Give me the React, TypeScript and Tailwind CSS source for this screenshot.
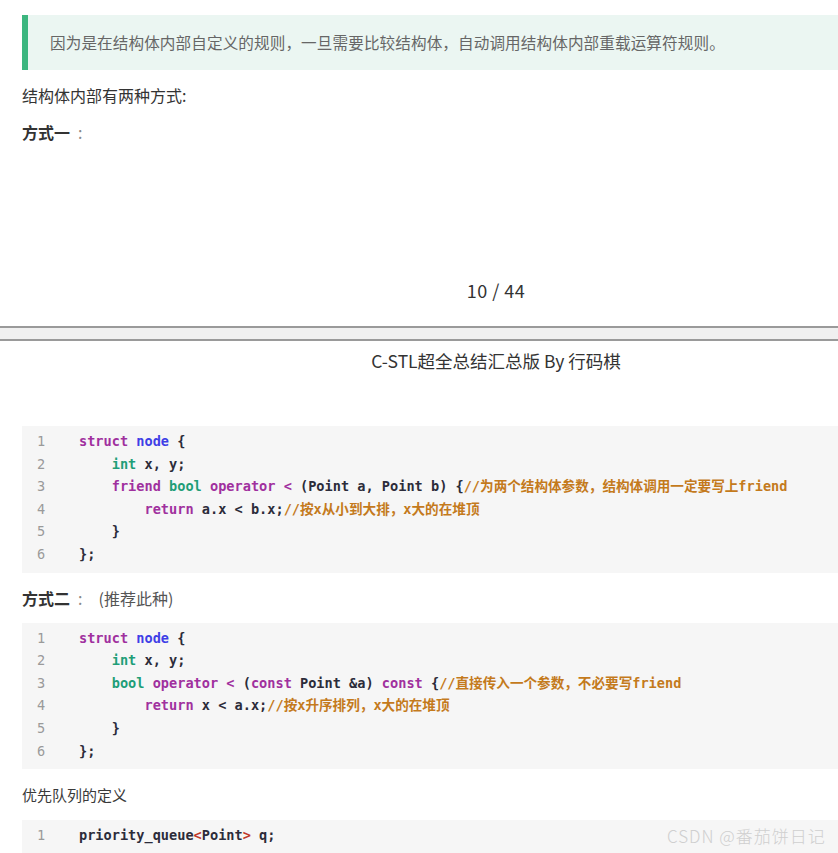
import React from "react";

type Tok = [string, string];

const K = "text-[#a0309e]"; // keyword purple
const T = "text-[#1f9e78]"; // type teal
const N = "text-[#3f3fe6]"; // name blue
const D = "text-[#2c2c3a]"; // default dark
const C = "text-[#c47a1c]"; // comment
const R = "text-[#c0392b]"; // angle brackets

const sans = "font-['Noto_Sans_CJK_SC','Noto_Sans',sans-serif]";
const mono = "font-['DejaVu_Sans_Mono','Noto_Sans_CJK_SC',monospace]";

const codeOne: Tok[][] = [
  [[K, "struct "], [N, "node "], [D, "{"]],
  [[D, "    "], [T, "int "], [D, "x, y;"]],
  [[D, "    "], [K, "friend "], [T, "bool "], [K, "operator < "], [D, "(Point a, Point b) {"], [C, "//为两个结构体参数，结构体调用一定要写上friend"]],
  [[D, "        "], [K, "return "], [D, "a.x < b.x;"], [C, "//按x从小到大排，x大的在堆顶"]],
  [[D, "    }"]],
  [[D, "};"]],
];

const codeTwo: Tok[][] = [
  [[K, "struct "], [N, "node "], [D, "{"]],
  [[D, "    "], [T, "int "], [D, "x, y;"]],
  [[D, "    "], [T, "bool "], [K, "operator < "], [D, "("], [K, "const "], [D, "Point &a) "], [K, "const "], [D, "{"], [C, "//直接传入一个参数，不必要写friend"]],
  [[D, "        "], [K, "return "], [D, "x < a.x;"], [C, "//按x升序排列，x大的在堆顶"]],
  [[D, "    }"]],
  [[D, "};"]],
];

const codeThree: Tok[][] = [
  [[D, "priority_queue"], [R, "<"], [D, "Point"], [R, ">"], [D, " q;"]],
];

function CodeBlock({ lines, className = "" }: { lines: Tok[][]; className?: string }) {
  return (
    <div className={`bg-[#f6f6f6] pt-[4px] pb-[7px] ${className}`}>
      {lines.map((line, i) => (
        <div key={i} className={`flex h-[22.6px] items-center text-[13.6px] ${mono}`}>
          <span className="w-[57px] shrink-0 pl-[15px] font-normal text-[#9a9a9a]">{i + 1}</span>
          <span className="whitespace-pre font-bold">
            {line.map(([cls, txt], j) => (
              <span key={j} className={cls}>
                {txt}
              </span>
            ))}
          </span>
        </div>
      ))}
    </div>
  );
}

export default function App() {
  return (
    <div className={`relative h-[853px] w-[838px] overflow-hidden bg-white ${sans}`}>
      {/* upper page */}
      <div className="flex h-[326px] flex-col">
        <div className="pl-[22px] pt-[15px]">
          <div className="flex h-[55px] items-center border-l-[6px] border-[#3cb67f] bg-[#ebf6f2] pl-[22px]">
            <p className="text-[15.6px] tracking-[0.1px] text-[#666]">
              因为是在结构体内部自定义的规则，一旦需要比较结构体，自动调用结构体内部重载运算符规则。
            </p>
          </div>
          <p className="mt-[14px] text-[16px] leading-[22px] text-[#333]">结构体内部有两种方式:</p>
          <p className="mt-[15px] text-[16px] leading-[22px]">
            <span className="font-bold text-[#333]">方式一</span>
            <span className="ml-[8px] text-[#888]">:</span>
          </p>
        </div>
        <div className="mt-auto mb-[24px] flex justify-center pl-[154px]">
          <span className="text-[18px] leading-[24px] tracking-[0.5px] text-[#333]">10 / 44</span>
        </div>
      </div>

      {/* page break */}
      <div className="h-[15px] border-y-2 border-[#9a9a9a] bg-[#f0f0f0]" />

      {/* lower page */}
      <div className="flex h-[40px] items-center justify-center pl-[154px]">
        <span className="text-[17.5px] text-[#333]">C-STL超全总结汇总版 By 行码棋</span>
      </div>
      <div className="pl-[22px] pt-[45px]">
        <CodeBlock lines={codeOne} />
        <p className="mt-[15px] text-[16px] leading-[20px]">
          <span className="font-bold text-[#333]">方式二</span>
          <span className="ml-[8px] text-[#888]">:</span>
          <span className="ml-[16px] text-[#555]">(推荐此种)</span>
        </p>
        <CodeBlock lines={codeTwo} className="mt-[15px]" />
        <p className="mt-[16px] text-[15px] leading-[20px] text-[#3a3a3a]">优先队列的定义</p>
        <CodeBlock lines={codeThree} className="mt-[15px] h-[60px]" />
      </div>

      {/* watermark */}
      <div className="absolute left-[667px] top-[824px] text-[17px] leading-[24px] font-light tracking-[1px] text-[#cfcfcf]">
        CSDN @番茄饼日记
      </div>
    </div>
  );
}
